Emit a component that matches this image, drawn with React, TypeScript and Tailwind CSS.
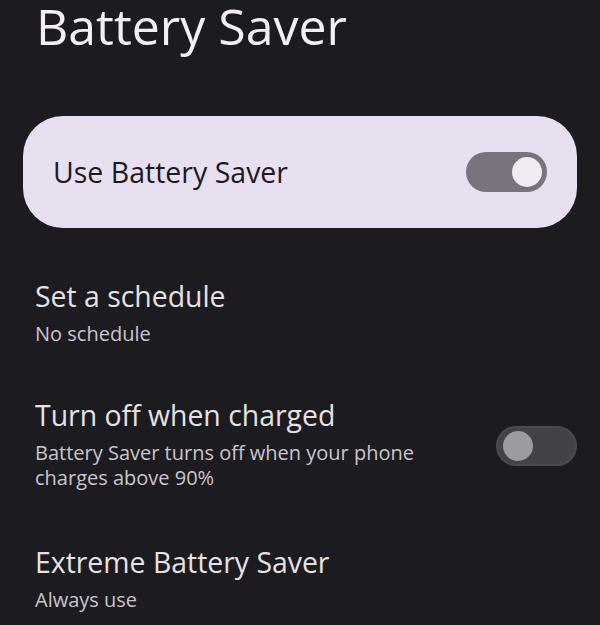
import React, { useState } from "react";

const font = { fontFamily: '"Open Sans", "Liberation Sans", sans-serif' };

function Switch({ on, onToggle, variant }: { on: boolean; onToggle: () => void; variant: "card" | "list" }) {
  if (variant === "card") {
    return (
      <button
        onClick={onToggle}
        className={`w-[81px] h-[40px] rounded-full flex items-center px-[5px] ${on ? "bg-[#7a737f] justify-end" : "bg-[#48474b] justify-start"}`}
      >
        <span className="w-[30px] h-[30px] rounded-full bg-[#f1ebf4]" />
      </button>
    );
  }
  return (
    <button
      onClick={onToggle}
      className={`w-[81px] h-[40px] rounded-full flex items-center px-[5px] border-2 border-[#4b4a4e] mt-[4px] ${on ? "bg-[#7a737f] justify-end" : "bg-[#434246] justify-start"}`}
    >
      <span className="w-[30px] h-[30px] rounded-full bg-[#9c9b9f]" />
    </button>
  );
}

export default function App() {
  const [saver, setSaver] = useState(true);
  const [turnOff, setTurnOff] = useState(false);

  return (
    <div className="w-[600px] h-[625px] bg-[#1c1b1f] overflow-hidden text-[#e6e1e5]" style={font}>
      <h1 className="pl-[36px] text-[50px] leading-[52px] text-[#f4eff4]">Battery Saver</h1>

      {/* main toggle card */}
      <div className="mx-[23px] mt-[64px] h-[112px] rounded-[40px] bg-[#e8dff0] flex items-center justify-between pl-[30px] pr-[30px]">
        <span className="text-[28.5px] text-[#1c1b1f]">Use Battery Saver</span>
        <Switch on={saver} onToggle={() => setSaver(!saver)} variant="card" />
      </div>

      <div className="pl-[35px] pr-[23px] pt-[50px]">
        <div className="flex flex-col">
          <span className="text-[28.4px] leading-[36px]">Set a schedule</span>
          <span className="text-[20px] leading-[25px] mt-[7px] text-[#cac4d0]">No schedule</span>
        </div>

        <div className="flex items-center justify-between mt-[51px]">
          <div className="flex flex-col">
            <span className="text-[28.4px] leading-[36px]">Turn off when charged</span>
            <span className="text-[20px] leading-[25px] mt-[7px] text-[#cac4d0] w-[410px]">
              Battery Saver turns off when your phone charges above 90%
            </span>
          </div>
          <Switch on={turnOff} onToggle={() => setTurnOff(!turnOff)} variant="list" />
        </div>

        <div className="flex flex-col mt-[54px]">
          <span className="text-[28.4px] leading-[36px]">Extreme Battery Saver</span>
          <span className="text-[20px] leading-[25px] mt-[7px] text-[#cac4d0]">Always use</span>
        </div>
      </div>
    </div>
  );
}
